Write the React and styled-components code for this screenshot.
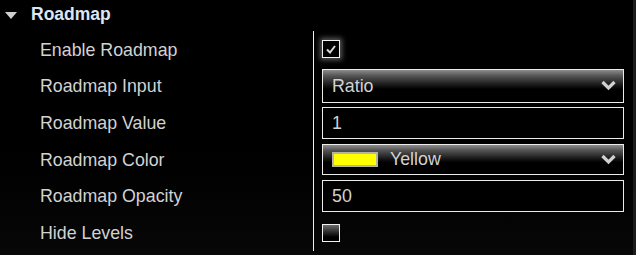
import React from 'react'
import styled, { createGlobalStyle } from 'styled-components'

const ROW_HEIGHT = '36.67px'

const GlobalStyle = createGlobalStyle`
  html, body {
    margin: 0;
    padding: 0;
    background: #000;
  }
  body {
    font-family: "Liberation Sans", Arial, sans-serif;
    overflow: hidden;
  }
`

const Root = styled.div`
  width: 636px;
  height: 255px;
  display: flex;
  background: linear-gradient(#000 0%, #000 60%, #070707 100%);
`

const Panel = styled.div`
  flex: 1;
  display: flex;
  flex-direction: column;
`

const ScrollEdge = styled.div`
  width: 3px;
  background: #1c1c1c;
`

const Header = styled.div`
  height: 31px;
  display: flex;
  align-items: center;
  padding-left: 5px;
  gap: 14px;
`

const Caret = styled.div`
  width: 0;
  height: 0;
  border-left: 6.5px solid transparent;
  border-right: 6.5px solid transparent;
  border-top: 7px solid #cfcfcf;
  margin-top: -1px;
`

const Title = styled.div`
  font-weight: bold;
  font-size: 17.5px;
  color: #dbe6f2;
  margin-top: -2px;
`

const Grid = styled.div`
  display: grid;
  grid-template-columns: 313px 1px 1fr;
  grid-auto-rows: ${ROW_HEIGHT};
  padding-right: 9px;
`

const Label = styled.div`
  grid-column: 1;
  display: flex;
  align-items: center;
  padding: 2px 0 0 40px;
  font-size: 17.8px;
  color: #d2d2d2;
`

const Divider = styled.div`
  grid-column: 2;
  grid-row: 1 / span 6;
  background: #f0f0f0;
`

const Cell = styled.div`
  grid-column: 3;
  display: flex;
  align-items: center;
  padding-left: 8px;
`

const Box = styled.div`
  width: 16px;
  height: 16px;
  border: 1px solid #f2f2f2;
  display: flex;
  align-items: center;
  justify-content: center;
  background: ${p => p.checked
    ? '#000'
    : 'linear-gradient(#6e6e6e 0%, #2a2a2a 45%, #000 75%)'};
  box-shadow: ${p => p.checked ? '0 0 5px 2px rgba(255,255,255,0.35)' : 'none'};
`

const Field = styled.div`
  flex: 1;
  box-sizing: border-box;
  height: ${p => p.h}px;
  border: 1px solid #ececec;
  display: flex;
  align-items: center;
  padding: 0 7px 0 9px;
  gap: 12px;
  font-size: 17.8px;
  color: #d2d2d2;
  background: ${p => p.select
    ? 'linear-gradient(#8c8c8c 0%, #555 18%, #161616 48%, #000 60%)'
    : '#000'};
`

const FieldText = styled.span`
  flex: 1;
  padding-top: 1px;
`

const Swatch = styled.div`
  width: 42px;
  height: 11px;
  background: #ffff00;
  border: 2px solid #b4b4a0;
`

const Chevron = () => (
  <svg width="15" height="11" viewBox="0 0 15 11">
    <polyline points="1.5,2 7.5,8 13.5,2" fill="none" stroke="#d0d0d0" strokeWidth="3.2" />
  </svg>
)

const Check = () => (
  <svg width="10" height="9" viewBox="0 0 10 9">
    <polyline points="1,4.5 4,7.5 9,1" fill="none" stroke="#d8d8d8" strokeWidth="2" />
  </svg>
)

const rows = [
  { label: 'Enable Roadmap', type: 'check', checked: true },
  { label: 'Roadmap Input', type: 'select', value: 'Ratio', h: 34 },
  { label: 'Roadmap Value', type: 'input', value: '1', h: 32 },
  { label: 'Roadmap Color', type: 'color', value: 'Yellow', h: 31 },
  { label: 'Roadmap Opacity', type: 'input', value: '50', h: 32 },
  { label: 'Hide Levels', type: 'check', checked: false },
]

const Control = ({ row }) => {
  if (row.type === 'check') {
    return <Box checked={row.checked}>{row.checked && <Check />}</Box>
  }
  return (
    <Field h={row.h} select={row.type !== 'input'}>
      {row.type === 'color' && <Swatch />}
      <FieldText>{row.value}</FieldText>
      {row.type !== 'input' && <Chevron />}
    </Field>
  )
}

const App = () => (
  <>
    <GlobalStyle />
    <Root>
      <Panel>
        <Header>
          <Caret />
          <Title>Roadmap</Title>
        </Header>
        <Grid>
          <Divider />
          {rows.map((row, i) => (
            <React.Fragment key={row.label}>
              <Label style={{ gridRow: i + 1 }}>{row.label}</Label>
              <Cell style={{ gridRow: i + 1 }}>
                <Control row={row} />
              </Cell>
            </React.Fragment>
          ))}
        </Grid>
      </Panel>
      <ScrollEdge />
    </Root>
  </>
)

export default App
